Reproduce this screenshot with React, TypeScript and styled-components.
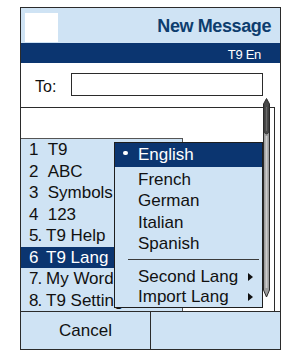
import styled, { createGlobalStyle } from 'styled-components'

const DARK = '#0b3570';
const LIGHT = '#cfe3f4';
const LINE = '#2b2b2b';

const GlobalStyle = createGlobalStyle`
    html, body {
        margin: 0;
        padding: 0;
        background: #ffffff;
    }
    body {
        font-family: "Liberation Sans", Arial, sans-serif;
        color: #111111;
    }
`;

const Frame = styled.div`
    margin: 7px 0 0 20px;
    width: 261px;
    height: 343px;
    box-sizing: border-box;
    border: 1px solid ${LINE};
    background: #ffffff;
    display: flex;
    flex-direction: column;
`;

const Header = styled.div`
    height: 35px;
    flex-shrink: 0;
    background: ${LIGHT};
    display: flex;
    align-items: center;
    justify-content: space-between;
    padding-right: 9px;
`;

const Picture = styled.div`
    width: 33px;
    height: 29px;
    margin-left: 4px;
    align-self: flex-end;
    margin-bottom: 1px;
    background: #ffffff;
`;

const Title = styled.h1`
    margin: 0;
    font-size: 18px;
    line-height: 18px;
    font-weight: bold;
    letter-spacing: -0.4px;
    color: #0d3d6e;
`;

const ModeBar = styled.div`
    height: 20px;
    flex-shrink: 0;
    box-sizing: border-box;
    background: ${DARK};
    color: #ffffff;
    font-size: 13px;
    line-height: 17px;
    letter-spacing: -0.3px;
    padding: 3px 19px 0 0;
    text-align: right;
`;

const ToRow = styled.div`
    height: 44px;
    flex-shrink: 0;
    box-sizing: border-box;
    padding: 10px 17px 0 14px;
    display: flex;
    align-items: flex-start;
    gap: 15px;
`;

const ToLabel = styled.label`
    font-size: 16px;
    line-height: 16px;
    padding-top: 6px;
`;

const ToInput = styled.div`
    flex: 1;
    height: 23px;
    box-sizing: border-box;
    border: 1.5px solid ${LINE};
    background: #ffffff;
`;

const Body = styled.div`
    position: relative;
    display: flex;
    flex-shrink: 0;
    height: 204px;
    box-sizing: border-box;
`;

const TextArea = styled.div`
    width: 254px;
    box-sizing: border-box;
    border-top: 1px solid ${LINE};
    border-right: 1px solid ${LINE};
    display: flex;
    flex-direction: column;
    justify-content: flex-end;
`;

const Menu = styled.ul`
    list-style: none;
    margin: 0;
    padding: 0;
    width: 162px;
    box-sizing: border-box;
    border-top: 1px solid #555555;
    border-right: 1px solid #555555;
    background: ${LIGHT};
`;

const MenuItem = styled.li<{ $active?: boolean }>`
    height: 21.5px;
    display: flex;
    align-items: center;
    padding-left: 8px;
    font-size: 17px;
    line-height: 21.5px;
    white-space: nowrap;
    overflow: hidden;
    background: ${(props) => (props.$active ? DARK : 'transparent')};
    color: ${(props) => (props.$active ? '#ffffff' : '#111111')};
`;

const Num = styled.span<{ $w: number }>`
    display: inline-block;
    width: ${(props) => props.$w}px;
    flex-shrink: 0;
    letter-spacing: -1px;
`;

const Popup = styled.div`
    position: absolute;
    left: 93px;
    top: 35px;
    width: 149px;
    height: 166px;
    box-sizing: border-box;
    border: 1px solid #1e1e1e;
    background: ${LIGHT};
    z-index: 2;
`;

const PopItem = styled.div<{ $active?: boolean; $h: number }>`
    height: ${(props) => props.$h}px;
    display: flex;
    align-items: center;
    font-size: 17px;
    line-height: ${(props) => props.$h}px;
    white-space: nowrap;
    background: ${(props) => (props.$active ? DARK : 'transparent')};
    color: ${(props) => (props.$active ? '#ffffff' : '#111111')};
`;

const Mark = styled.span`
    width: 23px;
    flex-shrink: 0;
    display: flex;
    align-items: center;
    padding-left: 8px;
    box-sizing: border-box;
    margin-top: -4px;
`;

const Dot = styled.span`
    width: 4.5px;
    height: 4.5px;
    border-radius: 50%;
    background: #ffffff;
`;

const Options = styled.div`
    padding-top: 1.5px;
`;

const Divider = styled.hr`
    border: none;
    border-top: 1px solid #3a3a3a;
    margin: 4px 3px 7.5px 13px;
`;

const Arrow = styled.span`
    margin-left: auto;
    margin-right: 9px;
    width: 0;
    height: 0;
    border-top: 4.5px solid transparent;
    border-bottom: 4.5px solid transparent;
    border-left: 5px solid #111111;
`;

const Scroll = styled.svg`
    position: absolute;
    left: 242px;
    top: -9px;
    z-index: 3;
`;

const SoftKeys = styled.div`
    flex: 1;
    display: grid;
    grid-template-columns: 130px 1fr;
    border-top: 1px solid ${LINE};
    background: ${LIGHT};
`;

const SoftKey = styled.div<{ $divider?: boolean }>`
    display: flex;
    align-items: center;
    justify-content: center;
    font-size: 17px;
    border-right: ${(props) => (props.$divider ? `1px solid ${LINE}` : 'none')};
    padding-top: 1px;
`;

const menuItems = [
    { num: '1', w: 18.7, label: 'T9' },
    { num: '2', w: 18.7, label: 'ABC' },
    { num: '3', w: 18.7, label: 'Symbols' },
    { num: '4', w: 18.7, label: '123' },
    { num: '5.', w: 17, label: 'T9 Help' },
    { num: '6', w: 17, label: 'T9 Lang' },
    { num: '7.', w: 17, label: 'My Words' },
    { num: '8.', w: 17, label: 'T9 Settings' },
];

const languages = ['French', 'German', 'Italian', 'Spanish'];

function ScrollBar() {
    return (
        <Scroll width="7" height="200" viewBox="0 0 7 200">
            <path d="M3.5 0.5 L6.5 6 L6.5 192 L3.5 199 L0.5 192 L0.5 6 Z" fill="#9d9d9d" stroke="#2a2a2a" strokeWidth="1" />
            <rect x="2.6" y="38" width="1.8" height="152" fill="#cdcdcd" />
            <path d="M3.5 1.5 L6 6.5 L6 32 Q6 36 3.5 36 Q1 36 1 32 L1 6.5 Z" fill="#4a4a4a" stroke="#2a2a2a" strokeWidth="0.6" />
            <rect x="3" y="9" width="1" height="24" fill="#6a6a6a" />
        </Scroll>
    );
}

function App() {
    return (
        <>
            <GlobalStyle />
            <Frame>
                <Header>
                    <Picture />
                    <Title>New Message</Title>
                </Header>

                <ModeBar>T9 En</ModeBar>

                <ToRow>
                    <ToLabel>To:</ToLabel>
                    <ToInput />
                </ToRow>

                <Body>
                    <TextArea>
                        <Menu>
                            {menuItems.map((item) => (
                                <MenuItem key={item.num} $active={item.num === '6'}>
                                    <Num $w={item.w}>{item.num}</Num>
                                    {item.label}
                                </MenuItem>
                            ))}
                        </Menu>
                    </TextArea>

                    <Popup>
                        <PopItem $active $h={24}>
                            <Mark><Dot /></Mark>
                            English
                        </PopItem>
                        <Options>
                            {languages.map((lang) => (
                                <PopItem key={lang} $h={21.5}>
                                    <Mark />
                                    {lang}
                                </PopItem>
                            ))}
                        </Options>
                        <Divider />
                        <PopItem $h={20}>
                            <Mark />
                            Second Lang
                            <Arrow />
                        </PopItem>
                        <PopItem $h={20}>
                            <Mark />
                            Import Lang
                            <Arrow />
                        </PopItem>
                    </Popup>

                    <ScrollBar />
                </Body>

                <SoftKeys>
                    <SoftKey $divider>Cancel</SoftKey>
                    <SoftKey />
                </SoftKeys>
            </Frame>
        </>
    );
}

export default App;
